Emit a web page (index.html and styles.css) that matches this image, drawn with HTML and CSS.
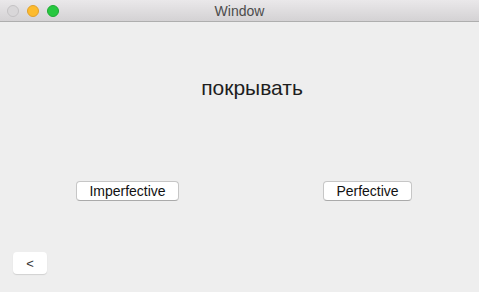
FILE: index.html
```html
<!DOCTYPE html>
<html lang="ru">
<head>
    <meta charset="UTF-8">
    <title>Window</title>
    <link rel="stylesheet" href="styles.css">
</head>
<body>
    <div class="window">
        <div class="titlebar">
            <div class="lights">
                <span class="light gray"></span>
                <span class="light orange"></span>
                <span class="light green"></span>
            </div>
            <div class="title">Window</div>
        </div>

        <div class="content">
            <div class="word">покрывать</div>

            <div class="choices">
                <button class="btn btn-imperfective">Imperfective</button>
                <button class="btn btn-perfective">Perfective</button>
            </div>

            <div class="footer">
                <button class="back">&lt;</button>
            </div>
        </div>
    </div>
</body>
</html>
```

FILE: styles.css
```css
body {
    margin: 0;
    padding: 0;
    font-family: "Liberation Sans", Arial, sans-serif;
    background-color: #ececec;
}

.window {
    width: 479px;
    height: 292px;
    display: flex;
    flex-direction: column;
    background-color: #eeeeee;
}

.titlebar {
    height: 21px;
    display: flex;
    align-items: center;
    position: relative;
    background: linear-gradient(#eae8ea, #d4d2d4);
    border-bottom: 1px solid #aeaeae;
}

.lights {
    display: flex;
    gap: 8px;
    padding-left: 7px;
}

.light {
    width: 12px;
    height: 12px;
    border-radius: 50%;
    box-sizing: border-box;
}

.light.gray {
    background-color: #d9d7d9;
    border: 1px solid #c4c2c4;
}

.light.orange {
    background-color: #fdbb2d;
    border: 1px solid #e1a02a;
}

.light.green {
    background-color: #27c840;
    border: 1px solid #1eaa33;
}

.title {
    position: absolute;
    left: 0;
    right: 0;
    text-align: center;
    font-size: 14px;
    color: #4c4c4c;
}

.content {
    flex: 1;
    display: flex;
    flex-direction: column;
}

.word {
    margin-top: 54px;
    padding-left: 25px;
    text-align: center;
    font-size: 21px;
    color: #1e1e1e;
}

.choices {
    display: flex;
    margin-top: 81px;
    padding-left: 76px;
}

.btn {
    height: 20px;
    padding: 0;
    font-family: "Liberation Sans", Arial, sans-serif;
    font-size: 14px;
    color: #111;
    background-color: #fff;
    border: 1px solid #c6c6c6;
    border-bottom-color: #aaaaaa;
    border-radius: 4px;
}

.btn-imperfective {
    width: 103px;
}

.btn-perfective {
    width: 89px;
    margin-left: 144px;
}

.footer {
    margin-top: 51px;
    padding-left: 13px;
}

.back {
    width: 34px;
    height: 22px;
    padding: 0;
    font-family: "Liberation Sans", Arial, sans-serif;
    font-size: 13px;
    color: #333;
    background-color: #fff;
    border: none;
    border-radius: 4px;
    box-shadow: 0 1px 1px rgba(0, 0, 0, 0.12);
}
```
